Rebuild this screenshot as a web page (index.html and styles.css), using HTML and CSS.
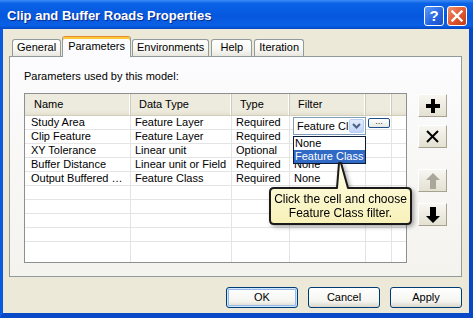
FILE: index.html
```html
<!DOCTYPE html>
<html>
<head>
<meta charset="utf-8">
<title>Clip and Buffer Roads Properties</title>
<link rel="stylesheet" href="styles.css">
</head>
<body>
<div class="window">
  <div class="titlebar">
    <span class="title">Clip and Buffer Roads Properties</span>
    <div class="tb-btns">
      <span class="tb-btn help">?</span>
      <span class="tb-btn close"><svg width="12" height="12" viewBox="0 0 12 12"><path d="M1.5 1.5 L10.5 10.5 M10.5 1.5 L1.5 10.5" stroke="#fff" stroke-width="2.4" stroke-linecap="square"/></svg></span>
    </div>
  </div>
  <div class="frame">
    <div class="tabs">
      <div class="tab">General</div>
      <div class="tab active">Parameters</div>
      <div class="tab">Environments</div>
      <div class="tab">Help</div>
      <div class="tab">Iteration</div>
    </div>
    <div class="panel">
      <div class="label">Parameters used by this model:</div>
      <div class="content">
        <div class="gridwrap">
          <div class="grid">
            <div class="row head"><div class="c">Name</div><div class="c">Data Type</div><div class="c">Type</div><div class="c">Filter</div><div class="c"></div><div class="c"></div></div>
            <div class="row"><div class="c">Study Area</div><div class="c">Feature Layer</div><div class="c">Required</div><div class="c"></div><div class="c"></div><div class="c"></div></div>
            <div class="row"><div class="c">Clip Feature</div><div class="c">Feature Layer</div><div class="c">Required</div><div class="c"></div><div class="c"></div><div class="c"></div></div>
            <div class="row"><div class="c">XY Tolerance</div><div class="c">Linear unit</div><div class="c">Optional</div><div class="c"></div><div class="c"></div><div class="c"></div></div>
            <div class="row"><div class="c">Buffer Distance</div><div class="c">Linear unit or Field</div><div class="c">Required</div><div class="c">None</div><div class="c"></div><div class="c"></div></div>
            <div class="row"><div class="c">Output Buffered …</div><div class="c">Feature Class</div><div class="c">Required</div><div class="c">None</div><div class="c"></div><div class="c"></div></div>
            <div class="row"><div class="c"></div><div class="c"></div><div class="c"></div><div class="c"></div><div class="c"></div><div class="c"></div></div>
            <div class="row"><div class="c"></div><div class="c"></div><div class="c"></div><div class="c"></div><div class="c"></div><div class="c"></div></div>
            <div class="row"><div class="c"></div><div class="c"></div><div class="c"></div><div class="c"></div><div class="c"></div><div class="c"></div></div>
            <div class="row"><div class="c"></div><div class="c"></div><div class="c"></div><div class="c"></div><div class="c"></div><div class="c"></div></div>
            <div class="row filler"><div class="c"></div><div class="c"></div><div class="c"></div><div class="c"></div><div class="c"></div><div class="c"></div></div>
          </div>
          <div class="combo">
            <span class="combo-text">Feature Cl</span>
            <span class="combo-btn"><svg width="9" height="6" viewBox="0 0 9 6"><path d="M1 1 L4.5 4.5 L8 1" fill="none" stroke="#4D6185" stroke-width="2"/></svg></span>
          </div>
          <div class="ellipsis">...</div>
          <div class="droplist">
            <div class="opt">None</div>
            <div class="opt sel">Feature Class</div>
          </div>
          <div class="balloon">
            <svg class="balloon-shape" width="148" height="68" viewBox="0 0 148 68">
              <defs>
                <linearGradient id="bg" x1="0" y1="0" x2="0" y2="1">
                  <stop offset="0" stop-color="#FFFFE6"/>
                  <stop offset="1" stop-color="#F7F0B8"/>
                </linearGradient>
              </defs>
              <path d="M6 27 H69 L71 2 L73 2 L80 27 H139 Q143 27 143 31 V59 Q143 63 139 63 H6 Q2 63 2 59 V31 Q2 27 6 27 Z" fill="url(#bg)" stroke="#1A1A1A" stroke-width="2" stroke-linejoin="round"/>
            </svg>
            <div class="balloon-text">Click the cell and choose<br>Feature Class filter.</div>
          </div>
        </div>
        <div class="side">
          <button class="ib add"><svg width="14" height="14" viewBox="0 0 14 14"><path d="M7 0 V14 M0 7 H14" stroke="#000" stroke-width="4"/></svg></button>
          <button class="ib del"><svg width="13" height="13" viewBox="0 0 13 13"><path d="M1 1 L12 12 M12 1 L1 12" stroke="#000" stroke-width="2"/></svg></button>
          <button class="ib up"><svg width="14" height="16" viewBox="0 0 14 16"><path d="M7 0 L14 7 H10 V16 H4 V7 H0 Z" fill="#A9A79A"/></svg></button>
          <button class="ib down"><svg width="14" height="16" viewBox="0 0 14 16"><path d="M7 16 L14 9 H10 V0 H4 V9 H0 Z" fill="#000"/></svg></button>
        </div>
      </div>
    </div>
    <div class="actions">
      <button class="btn default">OK</button>
      <button class="btn">Cancel</button>
      <button class="btn">Apply</button>
    </div>
  </div>
</div>
</body>
</html>
```

FILE: styles.css
```css
* { box-sizing: border-box; }
html, body { margin: 0; padding: 0; }
body {
  width: 473px;
  height: 318px;
  overflow: hidden;
  font-family: "Liberation Sans", Arial, sans-serif;
  font-size: 11px;
  color: #000;
  background: #0A5AE0;
}
.window {
  width: 473px;
  height: 318px;
  display: flex;
  flex-direction: column;
}
.titlebar {
  height: 29px;
  flex: none;
  display: flex;
  align-items: flex-start;
  justify-content: space-between;
  padding: 0 6px 0 7px;
  background: linear-gradient(#3D8AF4 0, #0A62E6 12%, #0558DE 55%, #0A60E4 88%, #0448C8 100%);
}
.title {
  color: #fff;
  font-weight: bold;
  font-size: 13px;
  line-height: 29px;
  padding-top: 1px;
  text-shadow: 1px 1px 0 #0A2A8C;
}
.tb-btns {
  display: flex;
  gap: 3px;
  padding-top: 6px;
}
.tb-btn {
  width: 20px;
  height: 20px;
  border: 1px solid #fff;
  border-radius: 3px;
  display: flex;
  align-items: center;
  justify-content: center;
  color: #fff;
}
.help {
  background: linear-gradient(135deg, #5F9BFA, #2463E0 60%, #1A52C6);
  font-weight: bold;
  font-size: 15px;
  line-height: 18px;
}
.close {
  background: linear-gradient(135deg, #F09270, #E0562D 55%, #C23C17);
}
.frame {
  flex: 1;
  background: #ECE9D8;
  border-left: 3px solid #0A5BE0;
  border-right: 4px solid #0747C9;
  border-bottom: 5px solid #0849C7;
  padding: 7px 7px 5px 6px;
  display: flex;
  flex-direction: column;
}
.tabs {
  display: flex;
  align-items: flex-end;
  gap: 2px;
  padding-left: 3px;
  height: 21px;
  margin-bottom: -1px;
  position: relative;
  z-index: 1;
  flex: none;
}
.tab {
  height: 17px;
  margin-bottom: 1px;
  padding: 0 4px;
  min-width: 41px;
  text-align: center;
  line-height: 15px;
  border: 1px solid #919B9C;
  border-bottom: none;
  border-radius: 3px 3px 0 0;
  background: linear-gradient(#FFFFFF, #F7F7F3 60%, #E8E7DF);
  white-space: nowrap;
}
.tab.active {
  height: 21px;
  margin: 0 -1px 0 -1px;
  padding: 2px 5px 0 5px;
  line-height: 15px;
  background: #FCFCFE;
  border-top: 1px solid #E68B2C;
  box-shadow: inset 0 2px 0 #FFC83C;
}
.panel {
  height: 221px;
  flex: none;
  border: 1px solid #919B9C;
  background: linear-gradient(#FCFCFE, #F4F3EE);
  padding: 12px 14px 0 14px;
}
.label {
  line-height: 14px;
  margin-bottom: 10px;
}
.content {
  display: flex;
  gap: 11px;
}
.gridwrap {
  position: relative;
  width: 383px;
  height: 170px;
  flex: none;
}
.grid {
  width: 100%;
  height: 100%;
  border: 1px solid #8E9090;
  background: #fff;
  display: flex;
  flex-direction: column;
}
.row {
  display: grid;
  grid-template-columns: 106px 101px 58px 76px 26px 1fr;
  height: 14px;
  flex: none;
}
.row .c {
  border-right: 1px solid #E4E4E4;
  border-bottom: 1px solid #E4E4E4;
  padding-left: 4px;
  line-height: 13px;
  white-space: nowrap;
  overflow: hidden;
}
.row .c:first-child { padding-left: 6px; }
.row .c:last-child { border-right: none; }
.row.head {
  height: 22px;
  background: linear-gradient(#EDEBDD 75%, #E2DECD);
}
.row.head .c {
  border-bottom: 1px solid #D2CEBD;
  border-right: 1px solid #CFCCBB;
  box-shadow: inset -1px 0 0 #FFFFFF;
  padding-left: 8px;
  line-height: 21px;
}
.row.head .c:first-child { padding-left: 9px; }
.row.head .c:last-child { border-right: none; box-shadow: none; }
.row.filler { flex: 1; }
.row.filler .c { border-bottom: none; }

.combo {
  position: absolute;
  left: 269px;
  top: 24px;
  width: 73px;
  height: 18px;
  border: 1px solid #7F9DB9;
  background: #fff;
  display: flex;
  align-items: center;
  padding: 1px;
}
.combo-text {
  flex: 1;
  overflow: hidden;
  white-space: nowrap;
  padding-left: 2px;
  line-height: 14px;
}
.combo-btn {
  width: 15px;
  height: 14px;
  flex: none;
  border: 1px solid #BACFF6;
  border-radius: 2px;
  background: linear-gradient(#E4ECFC, #C2D5F9);
  display: flex;
  align-items: center;
  justify-content: center;
}
.ellipsis {
  position: absolute;
  left: 344px;
  top: 25px;
  width: 22px;
  height: 10px;
  border: 1px solid #1D4F8C;
  border-radius: 2px;
  background: linear-gradient(#FFFFFF, #E8E8E2);
  font-size: 9px;
  line-height: 5px;
  text-align: center;
  color: #333;
}
.droplist {
  position: absolute;
  left: 269px;
  top: 43px;
  width: 73px;
  height: 28px;
  border: 1px solid #0A1A3A;
  background: #fff;
}
.opt {
  height: 13px;
  line-height: 13px;
  padding-left: 1px;
  white-space: nowrap;
}
.opt.sel {
  background: #316AC5;
  color: #fff;
}
.balloon {
  position: absolute;
  left: 244px;
  top: 68px;
  width: 148px;
  height: 68px;
  filter: drop-shadow(2px 2px 2px rgba(0, 0, 0, 0.35));
}
.balloon-shape {
  position: absolute;
  left: 0;
  top: 0;
}
.balloon-text {
  position: absolute;
  left: 2px;
  top: 31px;
  width: 141px;
  text-align: center;
  font-size: 12px;
  line-height: 14px;
  color: #000;
}
.side {
  width: 29px;
  flex: none;
  display: flex;
  flex-direction: column;
}
.ib {
  width: 29px;
  height: 23px;
  padding: 0;
  border: 1px solid;
  border-color: #FFFFFF #A5A292 #A5A292 #FFFFFF;
  background: linear-gradient(#F7F6F1, #E4E1D2);
  display: flex;
  align-items: center;
  justify-content: center;
}
.ib.add { margin-top: 1px; }
.ib.del { margin-top: 8px; }
.ib.up { margin-top: 21px; }
.ib.down { margin-top: 11px; }
.actions {
  display: flex;
  justify-content: flex-end;
  gap: 10px;
  margin-top: 10px;
}
.btn {
  width: 72px;
  height: 21px;
  padding: 0;
  border: 1px solid #003C74;
  border-radius: 3px;
  background: linear-gradient(#FFFFFF, #F4F4F0 70%, #DCD7CB);
  font-family: "Liberation Sans", Arial, sans-serif;
  font-size: 11px;
  line-height: 19px;
  text-align: center;
  color: #000;
}
.btn.default {
  box-shadow: inset 0 0 0 1px #CEE7FF, inset 0 0 0 2px #98B8EA;
}
```
